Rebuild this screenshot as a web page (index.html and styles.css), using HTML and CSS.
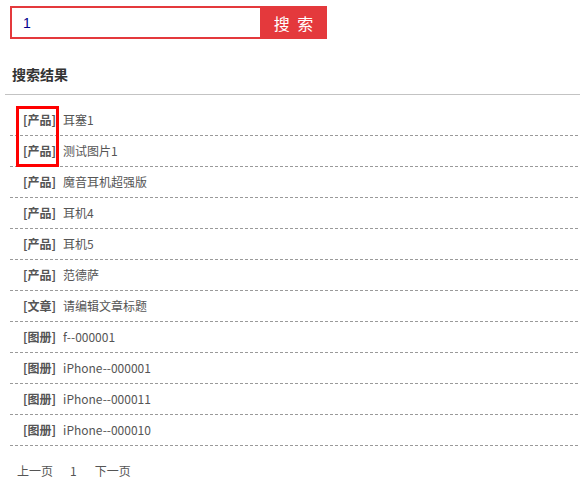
FILE: index.html
```html
<!DOCTYPE html>
<html lang="zh-CN">
<head>
<meta charset="utf-8">
<title>搜索结果</title>
<link rel="stylesheet" href="styles.css">
</head>
<body>
<div class="page">
  <form class="search">
    <input class="search-input" type="text" value="1">
    <button class="search-btn" type="button">搜 索</button>
  </form>
  <h3 class="result-title">搜索结果</h3>
  <div class="divider"></div>
  <div class="result-wrap">
    <div class="highlight"></div>
    <ul class="result-list">
      <li><span class="tag">[产品]</span><a>耳塞1</a></li>
      <li><span class="tag">[产品]</span><a>测试图片1</a></li>
      <li><span class="tag">[产品]</span><a>魔音耳机超强版</a></li>
      <li><span class="tag">[产品]</span><a>耳机4</a></li>
      <li><span class="tag">[产品]</span><a>耳机5</a></li>
      <li><span class="tag">[产品]</span><a>范德萨</a></li>
      <li><span class="tag">[文章]</span><a>请编辑文章标题</a></li>
      <li><span class="tag">[图册]</span><a>f--000001</a></li>
      <li><span class="tag">[图册]</span><a>iPhone--000001</a></li>
      <li><span class="tag">[图册]</span><a>iPhone--000011</a></li>
      <li><span class="tag">[图册]</span><a>iPhone--000010</a></li>
    </ul>
  </div>
  <div class="pager">
    <a>上一页</a>
    <a>1</a>
    <a>下一页</a>
  </div>
</div>
</body>
</html>
```
FILE: styles.css
```css
* { box-sizing: border-box; }
html, body { margin: 0; padding: 0; background: #fff; }
body {
  font-family: "Microsoft YaHei", "Noto Sans CJK SC", "Noto Sans", sans-serif;
  font-size: 12px;
  color: #555;
}
.page { width: 580px; }
.search {
  display: flex;
  margin: 6px 0 0 10px;
  height: 33px;
}
.search-input {
  width: 250px;
  height: 33px;
  border: 2px solid #e4393c;
  border-right: none;
  padding: 0 0 0 11px;
  font-family: "Liberation Sans", "Noto Sans CJK SC", sans-serif;
  font-size: 14px;
  color: #00008b;
  outline: none;
  margin: 0;
}
.search-btn {
  width: 67px;
  height: 33px;
  border: none;
  margin: 0;
  background: #e4393c;
  color: #fff;
  font-family: "Noto Sans CJK SC", sans-serif;
  font-size: 16px;
  letter-spacing: 2px;
  padding: 0 0 0 2px;
  cursor: pointer;
}
.result-title {
  margin: 0;
  padding: 25px 0 0 12px;
  height: 55px;
  font-size: 14px;
  font-weight: bold;
  line-height: 20px;
  color: #333;
}
.divider {
  margin-left: 5px;
  height: 1px;
  background: #c3c3c3;
}
.result-wrap {
  position: relative;
  margin: 10px 2px 0 10px;
}
.result-list {
  list-style: none;
  margin: 0;
  padding: 0;
}
.result-list li {
  display: flex;
  align-items: center;
  height: 31px;
  padding: 0 0 1px 13px;
  border-bottom: 1px dashed #9a9a9a;
  line-height: 16px;
}
.tag {
  font-weight: bold;
  color: #555;
  margin-right: 7px;
}
.result-list a { color: #555; }
.highlight {
  position: absolute;
  left: 6px;
  top: 1px;
  width: 43px;
  height: 61px;
  border: 3px solid #f00;
  pointer-events: none;
}
.pager {
  display: flex;
  margin: 17px 0 0 17px;
  line-height: 16px;
}
.pager a { color: #555; }
.pager a:nth-child(2) { margin: 0 18px 0 17px; }
```
